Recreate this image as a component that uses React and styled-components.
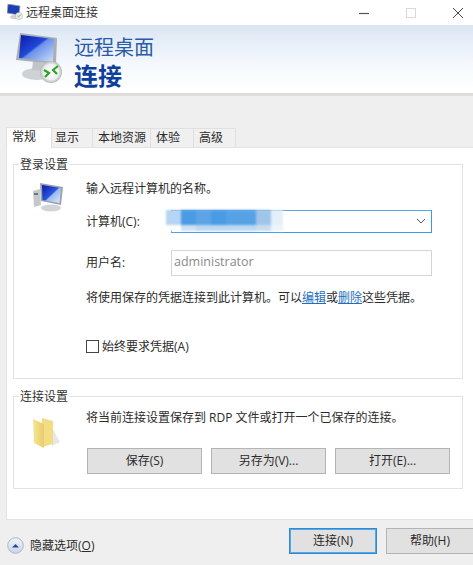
import React from "react";
import styled, { createGlobalStyle } from "styled-components";

const Global = createGlobalStyle`
  html, body { margin: 0; padding: 0; background: #fff; }
  * { box-sizing: border-box; }
`;
const Win = styled.div`
  width: 473px; height: 565px; overflow: hidden; background: #efefef;
  display: flex; flex-direction: column;
  font-family: "Open Sans", "Noto Sans CJK SC", sans-serif; font-size: 12px; color: #2b2b2b;
`;
const TitleBar = styled.div`
  height: 25px; flex: none; background: #fff; display: flex; align-items: center; padding-left: 7px; gap: 3px;
`;
const TitleText = styled.span` flex: 1; font-size: 12px; color: #333; line-height: 20px; `;
const Controls = styled.div` display: flex; align-items: center; gap: 31px; padding-right: 7px; `;
const Ctl = styled.svg` width: 16px; height: 16px; display: block; `;
const Banner = styled.div`
  height: 71px; flex: none; display: flex; padding: 8px 0 0 15px; gap: 7px;
  background: linear-gradient(#dbe6f3 0%, #e6eef8 25%, #f6f9fd 60%, #fff 95%);
  border-bottom: 3px solid #e0dcdc;
`;
const BannerText = styled.div` display: flex; flex-direction: column; color: #1b4ea1; `;
const BannerLight = styled.span` font-size: 20px; line-height: 30px; color: #2a5aa8; `;
const BannerBold = styled.span` font-size: 24px; font-weight: 700; line-height: 25px; color: #0f3f9b; `;
const Tabs = styled.div` display: flex; margin: 30px 0 0 6px; height: 21px; flex: none; align-items: flex-end; `;
const Tab = styled.div`
  width: ${p => p.$w}px; height: ${p => (p.$active ? 21 : 19)}px; flex: none; padding-left: ${p => p.$pl}px;
  line-height: 18px; font-size: 12px;
  background: ${p => (p.$active ? "#fff" : "#f0f0f0")};
  border: 1px solid #e0e0e0; border-left-width: ${p => (p.$active ? 1 : 0)}px; border-bottom: 0;
  margin-bottom: ${p => (p.$active ? -1 : 0)}px; position: relative; z-index: ${p => (p.$active ? 1 : 0)};
`;
const Panel = styled.div`
  margin-left: 6px; width: 475px; height: 373px; flex: none; background: #fff;
  border: 1px solid #e3e3e3; border-right: 0; padding: 10px 0 0 6px;
  display: flex; flex-direction: column; gap: 11px;
`;
const Group = styled.fieldset`
  margin: 0; width: 450px; height: ${p => p.$h}px; padding: 0; border: 1px solid #e3e3e3; position: relative;
  min-inline-size: 0; display: block;
`;
const Legend = styled.legend`
  margin-left: 5px; padding: 0 1px; font-size: 12px; line-height: 12px; height: 12px; color: #333;
  position: relative; top: 1px;
`;
const IconSlot = styled.div` position: absolute; left: ${p => p.$l}px; top: ${p => p.$t}px; `;
const GroupBody = styled.div` padding: ${p => p.$pt}px 0 0 72px; display: flex; flex-direction: column; `;
const Line = styled.div` line-height: 18px; white-space: nowrap; margin-top: ${p => p.$mt || 0}px; `;
const FieldRow = styled.div` display: flex; align-items: center; height: ${p => p.$h}px; margin-top: ${p => p.$mt}px; `;
const FieldLabel = styled.div` width: 85px; flex: none; line-height: 18px; padding-top: ${p => p.$pt || 0}px; `;
const Combo = styled.div`
  width: 261px; height: 23px; border: 1px solid #3f9ae6; border-top-color: #55a5e8; background: #fff; position: relative;
  display: flex; align-items: center; justify-content: flex-end; padding-right: 4px;
`;
const Mosaic = styled.div`
  position: absolute; left: -6px; top: -1px; display: flex; flex-direction: column; filter: blur(1px);
`;
const MRow = styled.div` display: flex; height: ${p => p.$h}px; `;
const MCell = styled.div` width: ${p => p.$w}px; background: ${p => p.$c}; `;
const Input = styled.div`
  width: 261px; height: 26px; border: 1px solid #d5d5d5; background: #fff; padding-left: 2px;
  color: #8a8a8a; font-size: 12.5px; line-height: 22px;
`;
const Link = styled.a` color: #1f6fc0; text-decoration: underline; `;
const CheckRow = styled.label` display: flex; align-items: center; gap: 3px; margin: 30px 0 0 0; height: 18px; `;
const Box = styled.span` width: 13px; height: 13px; border: 1px solid #444; background: #fff; flex: none; `;
const Buttons = styled.div` display: flex; gap: 9px; margin-top: ${p => p.$mt}px; padding-left: 1px; `;
const Btn = styled.button`
  width: ${p => p.$w}px; height: 26px; flex: none; padding: 0; background: #e1e1e1; font: inherit; color: #2b2b2b;
  border: 1px solid ${p => (p.$primary ? "#2d8ad8" : "#b4b4b4")}; ${p => p.$primary && "box-shadow: inset 0 0 0 1px #5aa7e6;"}
  line-height: 22px;
`;
const Footer = styled.div` flex: 1; display: flex; align-items: flex-start; padding: 8px 0 0 7px; `;
const Toggle = styled.div` display: flex; align-items: center; gap: 6px; height: 30px; flex: 1; padding-top: 4px; `;
const U = styled.span` text-decoration: underline; `;
const FootBtns = styled.div` display: flex; gap: 9px; flex: none; margin-right: -1px; `;

const BigMonitor = ({ size = 52 }) => (
  <svg width={size} height={size} viewBox="0 0 52 52">
    <defs>
      <linearGradient id="scr" x1="0" y1="0" x2="1" y2="1">
        <stop offset="0" stopColor="#0a1aa8" /><stop offset=".45" stopColor="#2048d8" /><stop offset=".5" stopColor="#6a90ea" /><stop offset="1" stopColor="#cfe0f8" />
      </linearGradient>
      <radialGradient id="bdg"><stop offset="0" stopColor="#fff" /><stop offset=".7" stopColor="#eef0ee" /><stop offset="1" stopColor="#b5b8b5" /></radialGradient>
    </defs>
    <ellipse cx="22" cy="41" rx="15" ry="6" fill="#cfd2d4" />
    <path d="M18 28 L30 30 L31 38 L17 37 Z" fill="#c2c5c8" />
    <path d="M5 0 L42 5 L41 31 L1 27 Z" fill="#a8aeb4" />
    <path d="M6 2 L39 6 L38 29 L4 25 Z" fill="url(#scr)" />
    <circle cx="36" cy="39" r="11" fill="url(#bdg)" />
    <path d="M29 37 L34 40 L30 44 M43 33 L38 37 L42 41" fill="none" stroke="#2aa32a" strokeWidth="2.2" />
  </svg>
);
const SmallPc = () => (
  <svg width="32" height="30" viewBox="0 0 32 30">
    <defs><linearGradient id="scr2" x1="0" y1="0" x2="1" y2="1"><stop offset="0" stopColor="#0a1aa8" /><stop offset=".5" stopColor="#2a55e0" /><stop offset=".55" stopColor="#9ab8f0" /><stop offset="1" stopColor="#e0ecfa" /></linearGradient></defs>
    <path d="M1 8 L8 6 L9 22 L2 24 Z" fill="#c4c8cc" />
    <path d="M2 10 h4 v2 h-4 z" fill="#6d7680" />
    <ellipse cx="19" cy="25" rx="10" ry="3.4" fill="#d2d5d8" />
    <path d="M8 0 L31 4 L29 22 L9 18 Z" fill="#9aa2aa" />
    <path d="M10 2 L29 5 L27.5 20 L10.5 17 Z" fill="url(#scr2)" />
  </svg>
);
const Folder = () => (
  <svg width="28" height="31" viewBox="0 0 28 31">
    <defs><linearGradient id="fld" x1="0" y1="0" x2="1" y2="0"><stop offset="0" stopColor="#f7e594" /><stop offset="1" stopColor="#e9cc6a" /></linearGradient></defs>
    <path d="M19 10 L27 24 L19 28 Z" fill="#e6e6e6" />
    <path d="M9 0 L20 3 L20 26 L9 29 Z" fill="#f3dc86" />
    <path d="M0 1 L11 6 L11 30 L1 25 Z" fill="url(#fld)" />
  </svg>
);

const Arrow = () => (
  <svg width="17" height="17" viewBox="0 0 17 17">
    <defs><linearGradient id="arr" x1="0" y1="0" x2="0" y2="1"><stop offset="0" stopColor="#f2f5fa" /><stop offset="1" stopColor="#c9d3e4" /></linearGradient></defs>
    <circle cx="8.5" cy="8.5" r="7.8" fill="url(#arr)" stroke="#a9b7cf" />
    <path d="M5 10.5 L8.5 7 L12 10.5 Z" fill="#2a4a9a" />
  </svg>
);
const TitleIcon = () => (
  <svg width="16" height="17" viewBox="0 0 16 17">
    <path d="M1 0 L13 2 L12 11 L0 9 Z" fill="#1d3fb5" stroke="#9aa2aa" strokeWidth=".8" />
    <ellipse cx="8" cy="13" rx="5" ry="2" fill="#cfd2d4" />
    <circle cx="12" cy="12" r="3.6" fill="#eceeea" stroke="#aaa" strokeWidth=".5" />
    <path d="M10.5 12 l1.2 1 M13.5 11 l-1.2 1" stroke="#2aa32a" strokeWidth="1" />
  </svg>
);

const cellsA = [[15, "#b5d5f2"], [15, "#4a9be3"], [15, "#5ca4e5"], [15, "#4a9be3"], [30, "#57a2e4"], [15, "#9fc5e8"], [12, "#e4effa"]];
const cellsB = [[15, "#fff"], [15, "#cfe2f5"], [60, "#bcd8f3"], [15, "#c8deef"], [12, "#edf4fb"]];

export default function App() {
  return (
    <Win>
      <Global />
      <TitleBar>
        <TitleIcon />
        <TitleText>远程桌面连接</TitleText>
        <Controls>
          <Ctl viewBox="0 0 16 16"><path d="M3 8.5 H13" stroke="#555" strokeWidth="1.2" /></Ctl>
          <Ctl viewBox="0 0 16 16"><rect x="3.5" y="3.5" width="9" height="9" fill="none" stroke="#d8d8d8" /></Ctl>
          <Ctl viewBox="0 0 16 16"><path d="M3 3 L13 13 M13 3 L3 13" stroke="#444" strokeWidth="1" /></Ctl>
        </Controls>
      </TitleBar>
      <Banner>
        <BigMonitor />
        <BannerText>
          <BannerLight>远程桌面</BannerLight>
          <BannerBold>连接</BannerBold>
        </BannerText>
      </Banner>
      <Tabs>
        <Tab $w={46} $pl={5} $active>常规</Tab>
        <Tab $w={41} $pl={3}>显示</Tab>
        <Tab $w={58} $pl={5}>本地资源</Tab>
        <Tab $w={43} $pl={5}>体验</Tab>
        <Tab $w={42} $pl={5}>高级</Tab>
      </Tabs>
      <Panel>
        <Group $h={221}>
          <Legend>登录设置</Legend>
          <IconSlot $l={18} $t={13}><SmallPc /></IconSlot>
          <GroupBody $pt={10}>
            <Line>输入远程计算机的名称。</Line>
            <FieldRow $h={24} $mt={11}>
              <FieldLabel $pt={2}>计算机(C):</FieldLabel>
              <Combo>
                <Mosaic>
                  <MRow $h={15}>{cellsA.map(([w, c], i) => <MCell key={i} $w={w} $c={c} />)}</MRow>
                  <MRow $h={6}>{cellsB.map(([w, c], i) => <MCell key={i} $w={w} $c={c} />)}</MRow>
                </Mosaic>
                <svg width="12" height="12" viewBox="0 0 12 12"><path d="M2 4 L6 8 L10 4" fill="none" stroke="#555" strokeWidth="1" /></svg>
              </Combo>
            </FieldRow>
            <FieldRow $h={26} $mt={17}>
              <FieldLabel>用户名:</FieldLabel>
              <Input>administrator</Input>
            </FieldRow>
            <Line $mt={13}>将使用保存的凭据连接到此计算机。可以<Link>编辑</Link>或<Link>删除</Link>这些凭据。</Line>
            <CheckRow><Box />始终要求凭据(A)</CheckRow>
          </GroupBody>
        </Group>
        <Group $h={99}>
          <Legend>连接设置</Legend>
          <IconSlot $l={19} $t={16}><Folder /></IconSlot>
          <GroupBody $pt={7}>
            <Line>将当前连接设置保存到 RDP 文件或打开一个已保存的连接。</Line>
            <Buttons $mt={21}>
              <Btn $w={115}>保存(S)</Btn>
              <Btn $w={115}>另存为(V)...</Btn>
              <Btn $w={115}>打开(E)...</Btn>
            </Buttons>
          </GroupBody>
        </Group>
      </Panel>
      <Footer>
        <Toggle><Arrow /><span>隐藏选项(<U>O</U>)</span></Toggle>
        <FootBtns>
          <Btn $w={88} $primary>连接(N)</Btn>
          <Btn $w={88}>帮助(H)</Btn>
        </FootBtns>
      </Footer>
    </Win>
  );
}
